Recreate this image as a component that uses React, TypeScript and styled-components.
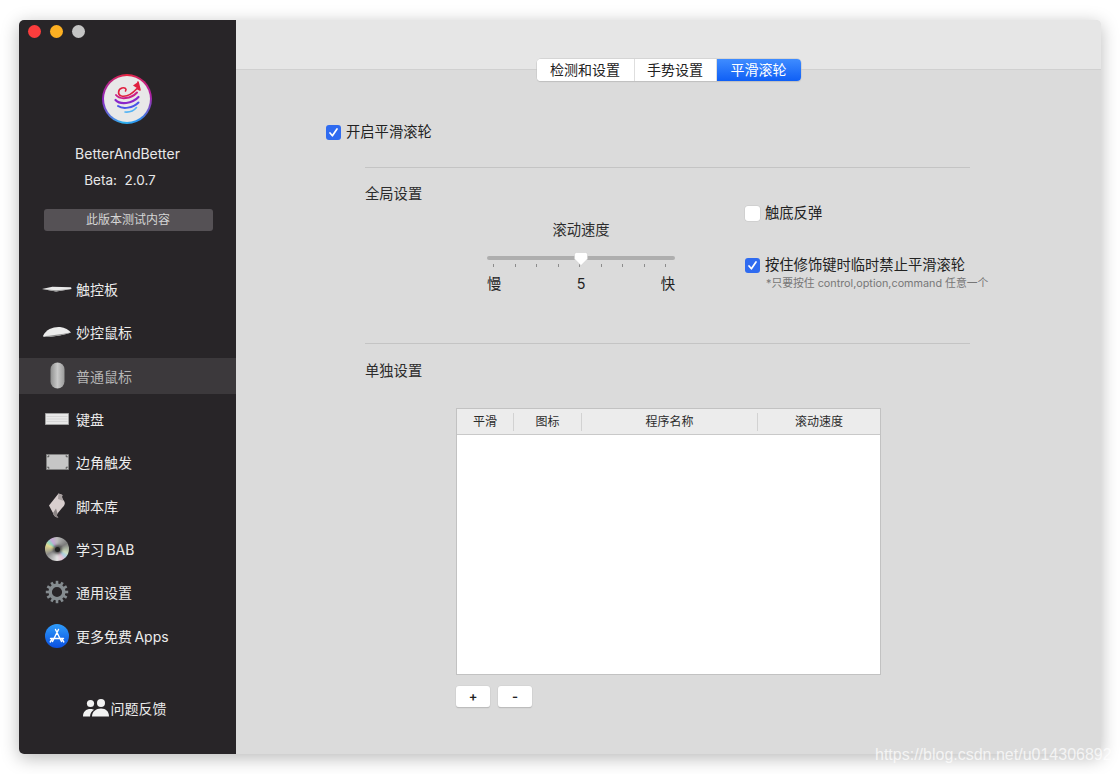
import styled, { createGlobalStyle } from 'styled-components';

const FONT = `Inter, "Noto Sans CJK SC", sans-serif`;

const GlobalStyle = createGlobalStyle`
    html, body {
        margin: 0;
        padding: 0;
        background: #fff;
    }
    body {
        font-family: ${FONT};
        -webkit-font-smoothing: antialiased;
    }
`;

const Page = styled.div`
    position: relative;
    width: 1120px;
    height: 774px;
    padding: 20px 19px;
    box-sizing: border-box;
    overflow: hidden;
`;

const Window = styled.div`
    display: flex;
    width: 1082px;
    height: 734px;
    border-radius: 5px;
    overflow: hidden;
    box-shadow: 0 4px 18px rgba(0, 0, 0, 0.28);
`;

const Sidebar = styled.aside`
    display: flex;
    flex-direction: column;
    align-items: stretch;
    flex: 0 0 217px;
    background: #282528;
    color: #e8e8e8;
`;

const TrafficLights = styled.div`
    display: flex;
    gap: 9px;
    padding: 5px 0 0 9px;
`;

const Light = styled.span<{ $color: string }>`
    width: 13px;
    height: 13px;
    border-radius: 50%;
    background: ${({ $color }) => $color};
`;

const LogoRing = styled.div`
    display: flex;
    align-items: center;
    justify-content: center;
    width: 50px;
    height: 50px;
    margin: 36px 0 0 83px;
    border-radius: 50%;
    background: conic-gradient(#e8263f 0deg, #b01fa5 80deg, #2b8ff0 150deg, #2fb4f0 190deg, #8d25c0 270deg, #e8263f 360deg);
`;

const LogoFace = styled.div`
    display: flex;
    align-items: center;
    justify-content: center;
    width: 46px;
    height: 46px;
    border-radius: 50%;
    background: #e8e8e8;
`;

const AppName = styled.div`
    margin-top: 20px;
    font-size: 14px;
    line-height: 20px;
    text-align: center;
`;

const Version = styled.div`
    margin-top: 6px;
    padding-right: 15px;
    font-size: 13.5px;
    line-height: 20px;
    text-align: center;
    white-space: pre;
`;

const NotesButton = styled.div`
    align-self: center;
    width: 169px;
    height: 22px;
    margin: 19px 0 0 1px;
    border-radius: 3px;
    background: #555155;
    color: #d6d6d6;
    font-size: 12px;
    line-height: 22px;
    text-align: center;
`;

const Nav = styled.nav`
    display: flex;
    flex-direction: column;
    gap: 7.35px;
    margin-top: 40px;
`;

const NavRow = styled.div<{ $active?: boolean }>`
    display: flex;
    align-items: center;
    height: 36px;
    background: ${({ $active }) => ($active ? '#3c393c' : 'transparent')};
    color: ${({ $active }) => ($active ? '#b5b5b5' : '#ececec')};
    font-size: 14px;
    word-spacing: -1.5px;
`;

const NavIcon = styled.span`
    display: flex;
    align-items: center;
    justify-content: center;
    flex: 0 0 30px;
    min-width: 0;
    height: 30px;
    margin: 0 4px 0 23px;
`;

const Feedback = styled.div`
    display: flex;
    align-items: center;
    justify-content: center;
    gap: 2px;
    margin: 39px 0 0 -6px;
    height: 30px;
    color: #ececec;
    font-size: 14px;
`;

const Main = styled.main`
    display: flex;
    flex-direction: column;
    flex: 1;
    background: #dbdbdb;
    color: #222;
`;

const Toolbar = styled.header`
    display: flex;
    justify-content: center;
    align-items: flex-end;
    flex: 0 0 50px;
    background: #e6e6e6;
    border-bottom: 1px solid #d0d0d0;
    box-sizing: border-box;
`;

const Segmented = styled.div`
    display: flex;
    height: 22px;
    margin-bottom: -12px;
    border-radius: 4px;
    background: #fff;
    box-shadow: 0 0 0 0.5px #c4c4c4, 0 1px 1px rgba(0, 0, 0, 0.14);
    overflow: hidden;
`;

const Segment = styled.div<{ $width: number; $active?: boolean }>`
    width: ${({ $width }) => $width}px;
    background: ${({ $active }) => ($active ? 'linear-gradient(#3f8cff, #0f5ff5)' : '#fff')};
    color: ${({ $active }) => ($active ? '#fff' : '#222')};
    border-right: ${({ $active }) => ($active ? 'none' : '1px solid #dedede')};
    box-sizing: border-box;
    font-size: 14px;
    line-height: 21px;
    text-align: center;
`;

const Content = styled.div`
    display: flex;
    flex-direction: column;
    padding: 53px 0 0 90px;
`;

const CheckRow = styled.label`
    display: flex;
    align-items: center;
    gap: 5px;
    height: 18px;
    font-size: 14.3px;
    line-height: 18px;
    white-space: nowrap;
`;

const CheckBox = styled.span<{ $checked?: boolean }>`
    display: flex;
    align-items: center;
    justify-content: center;
    flex: 0 0 15px;
    width: 15px;
    height: 15px;
    border-radius: 3px;
    background: ${({ $checked }) => ($checked ? '#2f6bf0' : '#fff')};
    box-shadow: ${({ $checked }) => ($checked ? 'none' : '0 0 0 0.5px #c6c6c6')};
`;

const Section = styled.section<{ $top: number }>`
    display: flex;
    flex-direction: column;
    width: 605px;
    margin: ${({ $top }) => $top}px 0 0 39px;
    border-top: 1px solid #c4c4c4;
`;

const SectionTitle = styled.div<{ $gap: number }>`
    margin-top: ${({ $gap }) => $gap}px;
    height: 20px;
    font-size: 14.3px;
    line-height: 20px;
    color: #2c2c2c;
`;

const GlobalBody = styled.div`
    display: flex;
    height: 99px;
`;

const SliderBlock = styled.div`
    display: flex;
    flex-direction: column;
    align-items: stretch;
    flex: 0 0 188px;
    margin: 16px 0 0 122px;
    font-size: 14.3px;
`;

const SliderTitle = styled.div`
    height: 20px;
    line-height: 20px;
    text-align: center;
    color: #2c2c2c;
`;

const Track = styled.div`
    position: relative;
    height: 4px;
    margin-top: 16px;
    border-radius: 2px;
    background: #aeaeae;
`;

const Thumb = styled.svg`
    position: absolute;
    left: 87px;
    top: -4px;
`;

const Ticks = styled.div`
    display: flex;
    justify-content: space-between;
    padding: 0 9px 0 6px;
    margin-top: 4px;
`;

const Tick = styled.span`
    width: 1px;
    height: 3px;
    background: #8c8c8c;
`;

const SliderLabels = styled.div`
    display: flex;
    justify-content: space-between;
    margin-top: 7px;
    line-height: 20px;
`;

const Options = styled.div`
    display: flex;
    flex-direction: column;
    margin: 0 0 0 70px;
`;

const SecondOption = styled.div`
    margin-top: 34px;
`;

const Hint = styled.div`
    margin: 2px 0 0 21px;
    color: #777;
    font-size: 10.8px;
    line-height: 16px;
    white-space: nowrap;
`;

const TableWrap = styled.div`
    display: flex;
    flex-direction: column;
    width: 425px;
    margin: 27px 0 0 91px;
`;

const Table = styled.div`
    display: flex;
    flex-direction: column;
    height: 267px;
    background: #fff;
    border: 1px solid #c2c2c2;
    box-sizing: border-box;
`;

const TableHead = styled.div`
    display: flex;
    align-items: center;
    height: 26px;
    flex: 0 0 26px;
    background: #ececec;
    border-bottom: 1px solid #c9c9c9;
    box-sizing: border-box;
`;

const HeadCell = styled.div<{ $width: number; $last?: boolean }>`
    flex: 0 0 ${({ $width }) => $width}px;
    height: 18px;
    border-right: ${({ $last }) => ($last ? 'none' : '1px solid #d2d2d2')};
    box-sizing: border-box;
    color: #2c2c2c;
    font-size: 12px;
    line-height: 18px;
    text-align: center;
`;

const TableActions = styled.div`
    display: flex;
    gap: 8px;
    margin-top: 11px;
`;

const ActionButton = styled.div`
    width: 34px;
    height: 21px;
    border-radius: 3px;
    background: #fff;
    box-shadow: 0 0 0 0.5px #cfcfcf, 0 1px 1px rgba(0, 0, 0, 0.25);
    color: #222;
    font-size: 13px;
    font-weight: 600;
    line-height: 21px;
    text-align: center;
`;

const Watermark = styled.div`
    position: absolute;
    left: 875px;
    top: 745px;
    color: rgba(255, 255, 255, 0.72);
    font-family: "Liberation Sans", sans-serif;
    font-size: 16px;
    line-height: 20px;
    white-space: nowrap;
`;

const Check = () => (
    <svg width="11" height="11" viewBox="0 0 11 11" fill="none">
        <path d="M2 6 L4.4 8.8 L9 2" stroke="#fff" strokeWidth="1.7" strokeLinecap="round" strokeLinejoin="round" />
    </svg>
);

const LogoMark = () => (
    <svg width="40" height="40" viewBox="0 0 40 40" fill="none">
        <path d="M31 3 L33 11 L30 9.5 C25 15 19 18 14.5 17 C10.5 16 10.5 10.5 15 9 C18 8.2 20 10 18.5 12" stroke="#e0203f" strokeWidth="1.6" strokeLinecap="round" strokeLinejoin="round" />
        <path d="M31 3 L26 6.5 L33 11 Z" fill="#e0203f" />
        <path d="M9 16 C13 21 24 20 30 13.5" stroke="#c81f8a" strokeWidth="2" strokeLinecap="round" />
        <path d="M8.5 21 C13 26 25 25 31.5 18" stroke="#8a25c9" strokeWidth="2.2" strokeLinecap="round" />
        <path d="M11 27 C16 30.5 26 29 31.5 23.5" stroke="#4a55e8" strokeWidth="2" strokeLinecap="round" />
        <path d="M18 33 C23 33.5 27 31.5 29.5 28.5" stroke="#55b4f4" strokeWidth="1.6" strokeLinecap="round" />
    </svg>
);

const TrackpadIcon = () => (
    <svg width="32" height="10" viewBox="0 0 32 10">
        <path d="M0 5 L11 2.6 L31 3.2 L31.5 5 L15 7.6 Z" fill="#e9e9e9" />
        <path d="M0 5 L15 7.6 L31.5 5 L15 6.4 Z" fill="#9a9a9a" />
    </svg>
);

const MagicMouseIcon = () => (
    <svg width="30" height="14" viewBox="0 0 30 14">
        <path d="M1 11 C4 4 12 1.5 18 2 C23 2.5 27 5 29 7.5 C24 9.5 12 12 4 12 C2 12 1 11.7 1 11 Z" fill="#ececec" />
        <path d="M1 11 C8 11 20 9 29 7.5 C24 9.5 12 12 4 12 Z" fill="#8f8f8f" />
    </svg>
);

const MouseIcon = () => (
    <svg width="15" height="27" viewBox="0 0 15 27">
        <defs>
            <linearGradient id="mouseBody" x1="0" x2="1" y1="0" y2="0">
                <stop offset="0" stopColor="#8f8f8f" />
                <stop offset="0.5" stopColor="#c9c9c9" />
                <stop offset="1" stopColor="#9a9a9a" />
            </linearGradient>
        </defs>
        <rect x="0.5" y="0.5" width="14" height="26" rx="7" fill="url(#mouseBody)" />
    </svg>
);

const KeyboardIcon = () => (
    <svg width="24" height="12" viewBox="0 0 24 12">
        <rect width="24" height="12" fill="#8e8e8e" />
        <rect x="0.8" y="0.8" width="22.4" height="10.4" fill="#e8e8e8" />
        <path d="M1.5 3.5 H22.5 M1.5 6 H22.5 M1.5 8.5 H22.5" stroke="#cfcfcf" strokeWidth="0.7" />
    </svg>
);

const HotCornerIcon = () => (
    <svg width="23" height="16" viewBox="0 0 23 16">
        <rect width="23" height="16" fill="#6f6f6f" />
        <rect x="0.8" y="0.8" width="21.4" height="14.4" fill="#c6c6c6" />
        <path d="M2 3.4 V2 H3.4 M19.6 2 H21 V3.4 M2 12.6 V14 H3.4 M19.6 14 H21 V12.6" stroke="#444" strokeWidth="1" fill="none" />
    </svg>
);

const ScriptIcon = () => (
    <svg width="18" height="25" viewBox="0 0 18 25">
        <path d="M10.5 0.5 L14.5 2 C13.5 4 14.2 6 16 8 C17.5 10 17 12 14 15 L9.5 20.5 C8.5 22.5 9 23.8 10.5 24.5 C7.5 24.5 5.5 22.5 5 20 L1 12.5 Z" fill="#d8cece" />
        <path d="M10.5 0.5 L14.5 2 C13.5 4 14.2 6 16 8 L10 6 Z" fill="#a8a0a0" />
        <path d="M5 20 L8 15.5 L9.5 20.5 C8.5 22.5 9 23.8 10.5 24.5 C7.5 24.5 5.5 22.5 5 20 Z" fill="#8b8484" />
    </svg>
);

const Disc = styled.span`
    display: flex;
    align-items: center;
    justify-content: center;
    width: 24px;
    height: 24px;
    border-radius: 50%;
    background: conic-gradient(#bdbdbd 0deg, #7c7c7c 60deg, #d0dfc0 110deg, #aed0e2 130deg, #e2c2d4 150deg, #e2e2e2 180deg, #8a8a8a 240deg, #e2da92 290deg, #92d8c2 310deg, #c8a8d8 330deg, #bdbdbd 360deg);
`;

const DiscHole = styled.span`
    width: 5px;
    height: 5px;
    border-radius: 50%;
    background: #222;
    box-shadow: 0 0 3px 2px #4a4a4a;
`;

const gearTeeth = Array.from({ length: 12 }, (_, i) => i * 30);

const GearIcon = () => (
    <svg width="24" height="24" viewBox="0 0 24 24">
        {gearTeeth.map(angle => (
            <rect key={angle} x="10.7" y="0.8" width="2.6" height="5" fill="#858c90" transform={`rotate(${angle} 12 12)`} />
        ))}
        <circle cx="12" cy="12" r="6.8" fill="none" stroke="#858c90" strokeWidth="3.4" />
    </svg>
);

const AppStoreIcon = () => (
    <svg width="24" height="24" viewBox="0 0 24 24">
        <defs>
            <linearGradient id="storeBody" x1="0" x2="0" y1="0" y2="1">
                <stop offset="0" stopColor="#2f9dfb" />
                <stop offset="1" stopColor="#0a4fe0" />
            </linearGradient>
        </defs>
        <circle cx="12" cy="12" r="12" fill="url(#storeBody)" />
        <path d="M10.5 5.5 L16.5 17.5 M13.5 5.5 L7.5 17.5 M5.5 14.5 H18.5 M5.2 18 L6.8 15.5 M18.8 18 L17.2 15.5" stroke="#fff" strokeWidth="1.4" strokeLinecap="round" />
    </svg>
);

const PeopleIcon = () => (
    <svg width="26" height="18" viewBox="0 0 26 18" fill="#f2f2f2">
        <circle cx="7.5" cy="4.5" r="3.6" />
        <circle cx="18" cy="4" r="4" />
        <path d="M0 17.5 C0 12.5 3 10 7.5 10 C9 10 10 10.3 11 10.8 C8.5 12.3 7.3 14.5 7 17.5 Z" />
        <path d="M9 17.5 C9 12.5 13 9.5 18 9.5 C23 9.5 26 12.5 26 17.5 Z" />
    </svg>
);

const navItems = [
    { label: '触控板', icon: <TrackpadIcon /> },
    { label: '妙控鼠标', icon: <MagicMouseIcon /> },
    { label: '普通鼠标', icon: <MouseIcon />, active: true },
    { label: '键盘', icon: <KeyboardIcon /> },
    { label: '边角触发', icon: <HotCornerIcon /> },
    { label: '脚本库', icon: <ScriptIcon /> },
    { label: '学习 BAB', icon: <Disc><DiscHole /></Disc> },
    { label: '通用设置', icon: <GearIcon /> },
    { label: '更多免费 Apps', icon: <AppStoreIcon /> },
];

const tableColumns = [
    { label: '平滑', width: 57 },
    { label: '图标', width: 68 },
    { label: '程序名称', width: 176 },
    { label: '滚动速度', width: 122, last: true },
];

const App = () => (
    <Page>
        <GlobalStyle />
        <Window>
            <Sidebar>
                <TrafficLights>
                    <Light $color="#fc3d3d" />
                    <Light $color="#fdb022" />
                    <Light $color="#c4c4c4" />
                </TrafficLights>
                <LogoRing>
                    <LogoFace>
                        <LogoMark />
                    </LogoFace>
                </LogoRing>
                <AppName>BetterAndBetter</AppName>
                <Version>Beta:  2.0.7</Version>
                <NotesButton>此版本测试内容</NotesButton>
                <Nav>
                    {navItems.map(item => (
                        <NavRow key={item.label} $active={item.active}>
                            <NavIcon>{item.icon}</NavIcon>
                            {item.label}
                        </NavRow>
                    ))}
                </Nav>
                <Feedback>
                    <PeopleIcon />
                    问题反馈
                </Feedback>
            </Sidebar>
            <Main>
                <Toolbar>
                    <Segmented>
                        <Segment $width={98}>检测和设置</Segment>
                        <Segment $width={82}>手势设置</Segment>
                        <Segment $width={84} $active>平滑滚轮</Segment>
                    </Segmented>
                </Toolbar>
                <Content>
                    <CheckRow>
                        <CheckBox $checked><Check /></CheckBox>
                        开启平滑滚轮
                    </CheckRow>
                    <Section $top={26}>
                        <SectionTitle $gap={16}>全局设置</SectionTitle>
                        <GlobalBody>
                            <SliderBlock>
                                <SliderTitle>滚动速度</SliderTitle>
                                <Track>
                                    <Thumb width="14" height="14" viewBox="0 0 14 14">
                                        <path d="M2.5 0.5 H11.5 C12.5 0.5 13.5 1.5 13.5 2.5 V7 L7 13.5 L0.5 7 V2.5 C0.5 1.5 1.5 0.5 2.5 0.5 Z" fill="#fff" stroke="#c9c9c9" strokeWidth="0.5" />
                                    </Thumb>
                                </Track>
                                <Ticks>
                                    {Array.from({ length: 9 }, (_, i) => <Tick key={i} />)}
                                </Ticks>
                                <SliderLabels>
                                    <span>慢</span>
                                    <span>5</span>
                                    <span>快</span>
                                </SliderLabels>
                            </SliderBlock>
                            <Options>
                                <CheckRow>
                                    <CheckBox />
                                    触底反弹
                                </CheckRow>
                                <SecondOption>
                                    <CheckRow>
                                        <CheckBox $checked><Check /></CheckBox>
                                        按住修饰键时临时禁止平滑滚轮
                                    </CheckRow>
                                    <Hint>*只要按住 control,option,command 任意一个</Hint>
                                </SecondOption>
                            </Options>
                        </GlobalBody>
                    </Section>
                    <Section $top={40}>
                        <SectionTitle $gap={17}>单独设置</SectionTitle>
                        <TableWrap>
                            <Table>
                                <TableHead>
                                    {tableColumns.map(column => (
                                        <HeadCell key={column.label} $width={column.width} $last={column.last}>
                                            {column.label}
                                        </HeadCell>
                                    ))}
                                </TableHead>
                            </Table>
                            <TableActions>
                                <ActionButton>+</ActionButton>
                                <ActionButton>-</ActionButton>
                            </TableActions>
                        </TableWrap>
                    </Section>
                </Content>
            </Main>
        </Window>
        <Watermark>https://blog.csdn.net/u014306892</Watermark>
    </Page>
);

export default App;
